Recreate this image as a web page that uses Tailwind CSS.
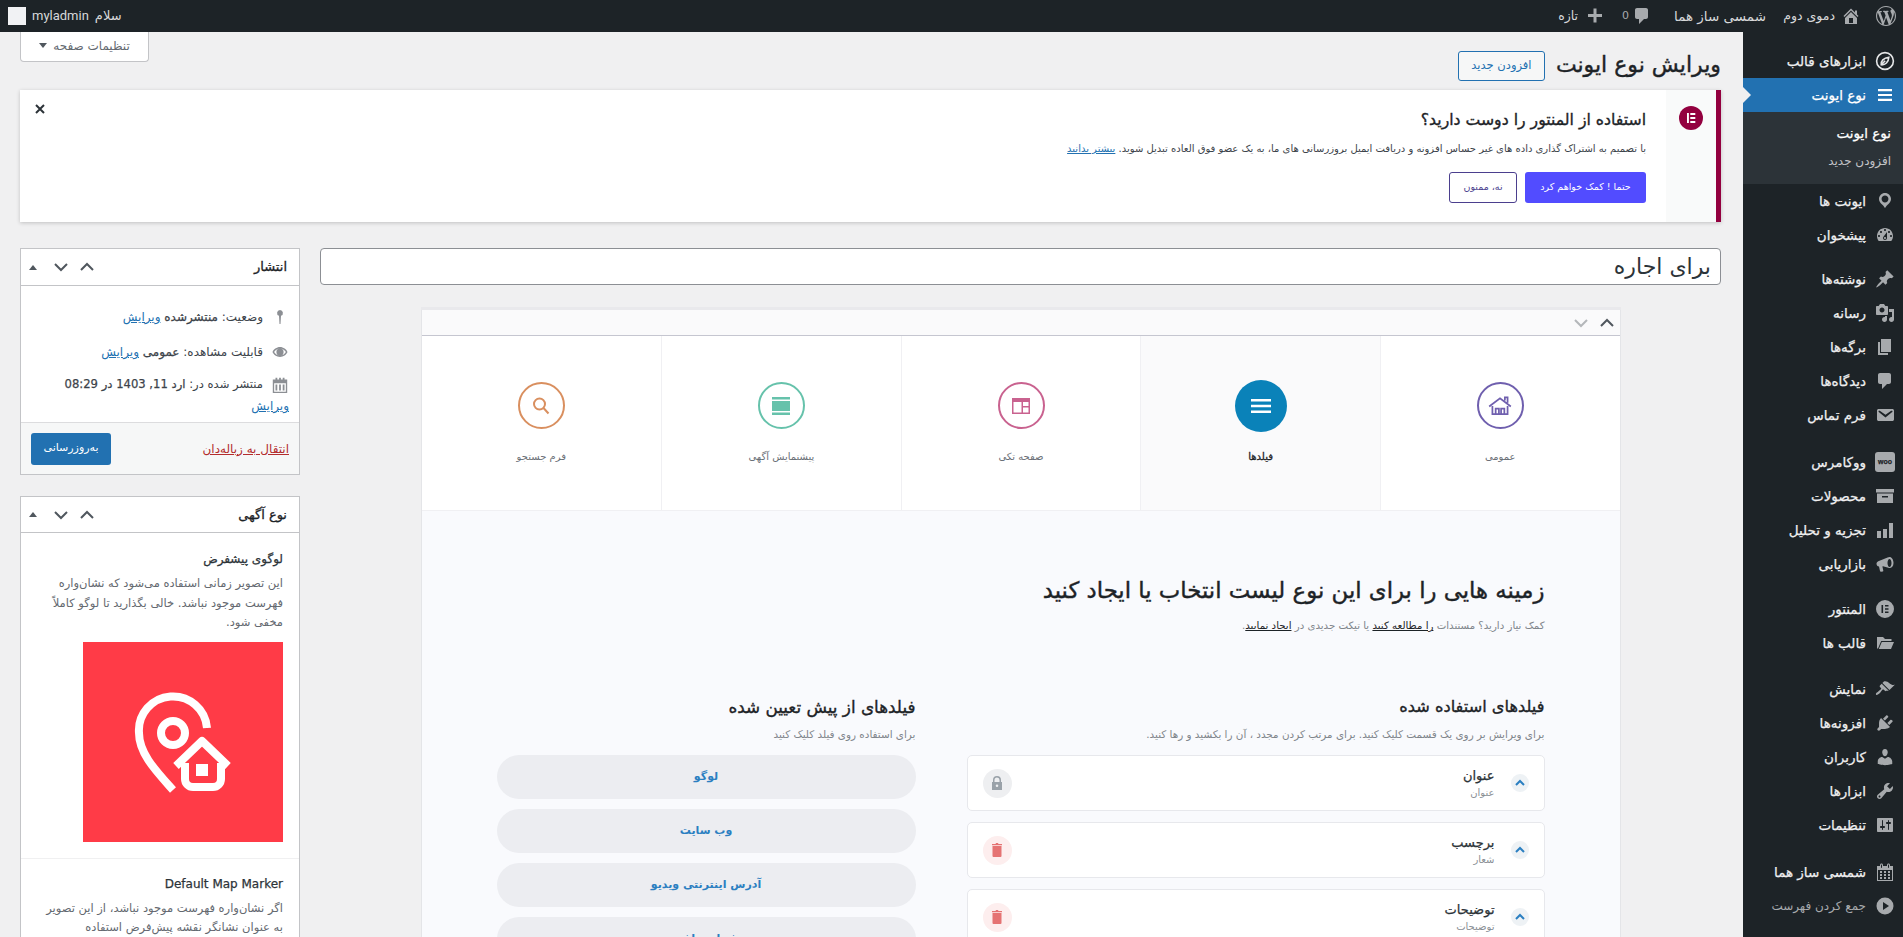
<!DOCTYPE html>
<html lang="fa" dir="rtl">
<head>
    <meta charset="UTF-8">
    <title>ویرایش نوع ایونت</title>
    <script src="https://cdn.jsdelivr.net/npm/@tailwindcss/browser@4"></script>
</head>
<body class="h-screen overflow-hidden bg-[#f0f0f1] text-[#3c434a] text-[12px] font-['DejaVu_Sans',sans-serif]">
    <!-- admin bar -->
    <header class="h-8 bg-[#1d2327] text-[#d7d8da] text-[12.5px] flex items-center justify-between">
        <div class="flex items-center">
            <svg class="w-5 h-5 mr-[7px] fill-[#a7aaad]" viewBox="0 0 20 20"><path fill-rule="evenodd" d="M20 10c0-5.51-4.49-10-10-10C4.48 0 0 4.49 0 10c0 5.52 4.48 10 10 10 5.51 0 10-4.48 10-10zM7.78 15.37L4.37 6.22c.55-.02 1.17-.08 1.17-.08.5-.06.44-1.13-.06-1.11 0 0-1.45.11-2.37.11-.18 0-.37 0-.58-.01C4.12 2.69 6.87 1.11 10 1.11c2.33 0 4.45.87 6.05 2.34-.68-.11-1.65.39-1.65 1.58 0 .74.45 1.36.9 2.1.35.61.55 1.36.55 2.46 0 1.49-1.4 5-1.4 5l-3.03-8.37c.54-.02.82-.17.82-.17.5-.05.44-1.25-.06-1.22 0 0-1.44.12-2.38.12-.87 0-2.33-.12-2.33-.12-.5-.03-.56 1.2-.06 1.22l.92.08 1.26 3.41zM17.41 10c.24-.64.74-1.87.43-4.25.7 1.29 1.05 2.71 1.05 4.25 0 3.29-1.73 6.24-4.4 7.78.97-2.59 1.94-5.2 2.92-7.78zM6.1 18.09C3.12 16.65 1.11 13.53 1.11 10c0-1.3.23-2.48.72-3.59C3.25 10.3 4.67 14.2 6.1 18.09zm4.03-6.63l2.58 6.98c-.86.29-1.76.45-2.71.45-.79 0-1.57-.11-2.29-.33.81-2.38 1.62-4.74 2.42-7.1z"/></svg>
            <svg class="w-5 h-5 mr-[15px] fill-[#a7aaad]" viewBox="0 0 20 20"><path d="M16 8.5l1.53 1.53-1.06 1.06L10 4.62l-6.47 6.47-1.06-1.06L10 2.5l4 4v-2h2v4zm-6-2.46l6 5.99V18H4v-5.97zM12 17v-5H8v5h4z"/></svg>
            <span class="mr-[6px] w-[54px] whitespace-nowrap">دموی دوم</span>
            <span class="mr-[15px] w-[98px] whitespace-nowrap text-[13.5px]">شمسی ساز هما</span>
            <svg class="w-5 h-5 mr-[16px] fill-[#a7aaad]" viewBox="0 0 20 20"><path d="M5 2h9c1.1 0 2 .9 2 2v7c0 1.1-.9 2-2 2h-2l-5 5v-5H5c-1.1 0-2-.9-2-2V4c0-1.1.9-2 2-2z"/></svg>
            <span class="mr-[3px] w-2 text-[#a7aaad] text-[11px]">0</span>
            <svg class="w-5 h-5 mr-[16px] fill-[#a7aaad]" viewBox="0 0 20 20"><path d="M17 8v3h-5.5v5.500h-3V11H3V8h5.500V2.500h3V8H17z"/></svg>
            <span class="mr-[7px]">تازه</span>
        </div>
        <div class="flex items-center ml-2 gap-[6px]">
            <span class="text-[13px]">سلام</span>
            <span class="font-['Roboto',sans-serif] text-[13px]">myladmin</span>
            <span class="w-[18px] h-[18px] bg-[#f1f2f4] block"></span>
        </div>
    </header>

    <div class="flex h-[905px]">
        <!-- admin menu -->
        <aside class="w-40 shrink-0 bg-[#1d2327] pt-3 text-[#f0f0f1] text-[13.5px] [-webkit-text-stroke:0.25px]">
            <a class="flex items-center h-[34px] pr-[8px] gap-[9px]"><svg class="w-5 h-5 fill-none stroke-[#e6e7e8] stroke-[1.6]" viewBox="0 0 20 20"><circle cx="10" cy="10" r="8.4"/><path d="M6.2 13.8c-.5-3.6 2.4-7 7.6-7.6-.2 4.8-3.6 8-7.6 7.6zM6.2 13.8l4-4"/></svg><span>ابزارهای قالب</span></a>
            <a class="relative flex items-center h-[34px] pr-[8px] gap-[9px] bg-[#2271b1] text-white"><svg class="w-5 h-5 fill-white" viewBox="0 0 20 20"><path d="M3 4h14v2.2H3zM3 8.9h14v2.2H3zM3 13.8h14V16H3z"/></svg><span>نوع ایونت</span><i class="absolute left-0 top-[9px] border-y-8 border-y-transparent border-l-8 border-l-[#f0f0f1]"></i></a>
            <div class="bg-[#2c3338] h-[72px] pt-[10px] pr-[12px]">
                <a class="flex items-center h-[22px] text-white">نوع ایونت</a>
                <a class="flex items-center h-[22px] mt-[6px] text-[12px] [-webkit-text-stroke:0] text-[#c3c4c7]">افزودن جدید</a>
            </div>
            <a class="flex items-center h-[34px] pr-[8px] gap-[9px]"><svg class="w-5 h-5 fill-[#a7aaad]" viewBox="0 0 20 20"><path d="M10 2c-3.31 0-6 2.69-6 6 0 2.02 1.17 3.71 2.53 4.89.43.37 1.18.96 1.85 1.83.74.97 1.41 2.01 1.62 2.28.21-.27.88-1.31 1.62-2.28.67-.87 1.42-1.46 1.85-1.83C14.83 11.71 16 10.02 16 8c0-3.31-2.69-6-6-6zm0 2.56c1.9 0 3.44 1.54 3.44 3.44S11.9 11.44 10 11.44 6.56 9.9 6.56 8 8.1 4.56 10 4.56z"/></svg><span>ایونت ها</span></a>
            <a class="flex items-center h-[34px] pr-[8px] gap-[9px]"><svg class="w-5 h-5 fill-[#a7aaad]" viewBox="0 0 20 20"><path fill-rule="evenodd" d="M3.76 16h12.48c1.1-1.37 1.76-3.11 1.76-5 0-4.42-3.58-8-8-8s-8 3.58-8 8c0 1.89.66 3.63 1.76 5zM10 4c.55 0 1 .45 1 1s-.45 1-1 1-1-.45-1-1 .45-1 1-1zM6 6c.55 0 1 .45 1 1s-.45 1-1 1-1-.45-1-1 .45-1 1-1zm8 0c.55 0 1 .45 1 1s-.45 1-1 1-1-.45-1-1 .45-1 1-1zm-5.37 5.55L12 7v6c0 1.1-.9 2-2 2s-2-.9-2-2c0-.57.24-1.08.63-1.45zM4 10c.55 0 1 .45 1 1s-.45 1-1 1-1-.45-1-1 .45-1 1-1zm12 0c.55 0 1 .45 1 1s-.45 1-1 1-1-.45-1-1 .45-1 1-1zm-5 3c0-.55-.45-1-1-1s-1 .45-1 1 .45 1 1 1 1-.45 1-1z"/></svg><span>پیشخوان</span></a>

            <a class="flex items-center h-[34px] mt-[10px] pr-[8px] gap-[9px]"><svg class="w-5 h-5 fill-[#a7aaad]" viewBox="0 0 20 20"><path d="M10.44 3.02l1.82-1.82 6.36 6.35-1.83 1.82c-1.05-.68-2.48-.57-3.41.36l-.75.75c-.92.93-1.04 2.35-.35 3.41l-1.83 1.82-2.41-2.41-2.8 2.79c-.42.42-3.38 2.71-3.8 2.29s1.86-3.39 2.28-3.81l2.79-2.79L4.1 9.36l1.83-1.82c1.05.69 2.48.57 3.4-.36l.75-.75c.93-.92 1.05-2.35.36-3.41z"/></svg><span>نوشته‌ها</span></a>
            <a class="flex items-center h-[34px] pr-[8px] gap-[9px]"><svg class="w-5 h-5 fill-[#a7aaad]" viewBox="0 0 20 20"><path fill-rule="evenodd" d="M13 11V4c0-.55-.45-1-1-1h-1.67L9 1H5L3.67 3H2c-.55 0-1 .45-1 1v7c0 .55.45 1 1 1h10c.55 0 1-.45 1-1zM7 4.5c1.38 0 2.5 1.12 2.5 2.5S8.38 9.5 7 9.5 4.5 8.38 4.5 7 5.62 4.5 7 4.5zM14 6h5v10.5c0 1.38-1.12 2.5-2.5 2.5S14 17.88 14 16.5s1.12-2.5 2.5-2.5c.17 0 .34.02.5.05V9h-3V6zm-4 8.05V13h2v3.5c0 1.38-1.12 2.5-2.5 2.5S7 17.88 7 16.5 8.12 14 9.5 14c.17 0 .34.02.5.05z"/></svg><span>رسانه</span></a>
            <a class="flex items-center h-[34px] pr-[8px] gap-[9px]"><svg class="w-5 h-5 fill-[#a7aaad]" viewBox="0 0 20 20"><path d="M6 15V2h10v13H6zm-1 1h8v2H3V5h2v11z"/></svg><span>برگه‌ها</span></a>
            <a class="flex items-center h-[34px] pr-[8px] gap-[9px]"><svg class="w-5 h-5 fill-[#a7aaad]" viewBox="0 0 20 20"><path d="M5 2h9c1.1 0 2 .9 2 2v7c0 1.1-.9 2-2 2h-2l-5 5v-5H5c-1.1 0-2-.9-2-2V4c0-1.1.9-2 2-2z"/></svg><span>دیدگاه‌ها</span></a>
            <a class="flex items-center h-[34px] pr-[8px] gap-[9px]"><svg class="w-5 h-5 fill-[#a7aaad]" viewBox="0 0 20 20"><path fill-rule="evenodd" d="M3.87 4h13.25C18.37 4 19 4.59 19 5.79v8.42c0 1.19-.63 1.79-1.88 1.79H3.87c-1.25 0-1.88-.6-1.88-1.79V5.79c0-1.2.63-1.79 1.88-1.79zm6.62 8.6l6.74-5.53c.24-.2.43-.66.13-1.07-.29-.41-.82-.42-1.17-.17l-5.7 3.86L4.8 5.83c-.35-.25-.88-.24-1.17.17-.3.41-.11.87.13 1.07z"/></svg><span>فرم تماس</span></a>

            <a class="flex items-center h-[34px] mt-[13px] pr-[8px] gap-[9px]"><span class="w-5 h-5 flex items-center justify-center bg-[#a7aaad] rounded-[3px] text-[#1d2327] text-[7px] font-bold font-['Liberation_Sans',sans-serif]">woo</span><span>ووکامرس</span></a>
            <a class="flex items-center h-[34px] pr-[8px] gap-[9px]"><svg class="w-5 h-5 fill-[#a7aaad]" viewBox="0 0 20 20"><path fill-rule="evenodd" d="M1 3h18v3.5H1zM2 7.5h16V17H2zM7 10v1.5h6V10z"/></svg><span>محصولات</span></a>
            <a class="flex items-center h-[34px] pr-[8px] gap-[9px]"><svg class="w-5 h-5 fill-[#a7aaad]" viewBox="0 0 20 20"><path d="M2 11h4v7H2zM8 9h4v9H8zM14 3h4v15h-4z"/></svg><span>تجزیه و تحلیل</span></a>
            <a class="flex items-center h-[34px] pr-[8px] gap-[9px]"><svg class="w-5 h-5 fill-[#a7aaad]" viewBox="0 0 20 20"><path fill-rule="evenodd" d="M14.5 3C16.6 3 18.5 5.6 18.5 9s-1.9 5-4 5c-.4 0-.8-.1-1.1-.2L8 12.2l-.6.2.9 4c.1.5-.2 1-.7 1.1l-1.5.3c-.5.1-1-.2-1.1-.7L4 12.6c-1.4-.2-2.5-1.3-2.5-2.8 0-1.2.8-2.2 1.8-2.6l9.3-3.6C13.2 3.2 13.8 3 14.5 3zM14.5 5c-1.1 0-2 1.8-2 4s.9 4 2 4 2-1.8 2-4-.9-4-2-4z"/></svg><span>بازاریابی</span></a>

            <a class="flex items-center h-[34px] mt-[11px] pr-[8px] gap-[9px]"><svg class="w-5 h-5 fill-[#a7aaad]" viewBox="0 0 20 20"><path fill-rule="evenodd" d="M10 1a9 9 0 1 0 0 18 9 9 0 0 0 0-18zM6.500 6h1.600v8H6.500zM10 6h3.500v1.600H10zM10 9.200h3.500v1.600H10zM10 12.400h3.500V14H10z"/></svg><span>المنتور</span></a>
            <a class="flex items-center h-[34px] pr-[8px] gap-[9px]"><svg class="w-5 h-5 fill-[#a7aaad]" viewBox="0 0 20 20"><path d="M2 4h6l2 2h6.500v2H6.200L3 15.500H2zM6.800 9H19l-3 7H3.800z"/></svg><span>قالب ها</span></a>

            <a class="flex items-center h-[34px] mt-[12px] pr-[8px] gap-[9px]"><svg class="w-5 h-5 fill-[#a7aaad]" viewBox="0 0 20 20"><path d="M14.48 11.06L7.41 3.99l1.5-1.5c.5-.56 2.3-.47 3.51.32 1.21.8 1.43 1.28 2.91 2.1 1.18.64 2.45 1.26 4.45.85zm-.71.71L6.7 4.7 4.93 6.47c-.39.39-.39 1.02 0 1.41l1.06 1.06c.39.39.39 1.03 0 1.42-.6.6-1.43 1.11-2.21 1.69-.35.26-.7.53-1.01.84C1.43 13.23.4 14.98 1.1 15.68c.7.7 2.45-.33 3.79-1.67.31-.31.58-.66.84-1.01.58-.78 1.09-1.61 1.69-2.21.39-.39 1.03-.39 1.42 0l1.06 1.06c.39.39 1.02.39 1.41 0z"/></svg><span>نمایش</span></a>
            <a class="flex items-center h-[34px] pr-[8px] gap-[9px]"><svg class="w-5 h-5 fill-[#a7aaad]" viewBox="0 0 20 20"><path d="M13.11 4.36L9.87 7.6 8 5.73l3.24-3.24c.35-.34 1.05-.2 1.56.32.52.51.66 1.21.31 1.55zm-8 1.77l.91-1.12 9.01 9.01-1.19.84c-.71.71-2.63 1.16-3.82 1.16H6.14L4.9 17.26c-.59.59-1.54.59-2.12 0-.59-.58-.59-1.53 0-2.12l1.24-1.24v-3.88c0-1.13.4-3.19 1.09-3.89zm7.26 3.97l3.24-3.24c.34-.35 1.04-.21 1.55.31.52.51.66 1.21.31 1.55l-3.24 3.25z"/></svg><span>افزونه‌ها</span></a>
            <a class="flex items-center h-[34px] pr-[8px] gap-[9px]"><svg class="w-5 h-5 fill-[#a7aaad]" viewBox="0 0 20 20"><path d="M10 9.25c-2.27 0-2.73-3.44-2.73-3.44C7 4.02 7.82 2 9.97 2c2.16 0 2.98 2.02 2.71 3.81 0 0-.41 3.44-2.68 3.44zm0 2.57L12.72 10c2.39 0 4.52 2.33 4.52 4.53v2.49s-3.65 1.13-7.24 1.13c-3.65 0-7.24-1.13-7.24-1.13v-2.49c0-2.25 1.94-4.48 4.47-4.48z"/></svg><span>کاربران</span></a>
            <a class="flex items-center h-[34px] pr-[8px] gap-[9px]"><svg class="w-5 h-5 fill-[#a7aaad]" viewBox="0 0 20 20"><path fill-rule="evenodd" d="M16.68 9.77c-1.34 1.34-3.3 1.67-4.95.99l-5.41 6.52c-.99.99-2.59.99-3.58 0s-.99-2.59 0-3.57l6.52-5.42c-.68-1.65-.35-3.61.99-4.95 1.28-1.28 3.12-1.62 4.72-1.06l-2.89 2.89 2.82 2.82 2.86-2.87c.53 1.58.18 3.39-1.08 4.65zM3.81 16.21c.4.39 1.04.39 1.43 0 .4-.4.4-1.04 0-1.43-.39-.4-1.03-.4-1.43 0-.39.39-.39 1.03 0 1.43z"/></svg><span>ابزارها</span></a>
            <a class="flex items-center h-[34px] pr-[8px] gap-[9px]"><svg class="w-5 h-5 fill-[#a7aaad]" viewBox="0 0 20 20"><path fill-rule="evenodd" d="M18 16V4c0-.55-.45-1-1-1H3c-.55 0-1 .45-1 1v12c0 .55.45 1 1 1h14c.55 0 1-.45 1-1zM8 11h1c.55 0 1 .45 1 1s-.45 1-1 1H8v1.5c0 .28-.22.5-.5.5s-.5-.22-.5-.5V13H6c-.55 0-1-.45-1-1s.45-1 1-1h1V5.5c0-.28.22-.5.5-.5s.5.22.5.5V11zm5-2h-1c-.55 0-1-.45-1-1s.45-1 1-1h1V5.5c0-.28.22-.5.5-.5s.5.22.5.5V7h1c.55 0 1 .45 1 1s-.45 1-1 1h-1v5.5c0 .28-.22.5-.5.5s-.5-.22-.5-.5V9z"/></svg><span>تنظیمات</span></a>

            <a class="flex items-center h-[34px] mt-[13px] pr-[8px] gap-[9px]"><svg class="w-5 h-5 fill-[#a7aaad]" viewBox="0 0 20 20"><path fill-rule="evenodd" d="M15 4h3v15H2V4h3V3c0-.41.15-.76.44-1.06.29-.29.65-.44 1.06-.44s.77.15 1.06.44c.29.3.44.65.44 1.06v1h4V3c0-.41.15-.76.44-1.06.29-.29.65-.44 1.06-.44s.77.15 1.06.44c.29.3.44.65.44 1.06v1zM6 3v2.5c0 .14.05.26.15.36.09.09.21.14.35.14s.26-.05.35-.14c.1-.1.15-.22.15-.36V3c0-.14-.05-.26-.15-.35-.09-.1-.21-.15-.35-.15s-.26.05-.35.15c-.1.09-.15.21-.15.35zm7 0v2.5c0 .14.05.26.14.36.1.09.22.14.36.14s.26-.05.36-.14c.09-.1.14-.22.14-.36V3c0-.14-.05-.26-.14-.35-.1-.1-.22-.15-.36-.15s-.26.05-.36.15c-.09.09-.14.21-.14.35zm4 15V8H3v10h14zM7 9v2H5V9h2zm2 0h2v2H9V9zm4 2V9h2v2h-2zm-6 1v2H5v-2h2zm2 0h2v2H9v-2zm4 2v-2h2v2h-2zm-6 1v2H5v-2h2zm4 2H9v-2h2v2zm4 0h-2v-2h2v2z"/></svg><span>شمسی ساز هما</span></a>
            <a class="flex items-center h-[34px] pr-[8px] gap-[9px] text-[12px] [-webkit-text-stroke:0] text-[#a7aaad]"><svg class="w-5 h-5 fill-[#a7aaad]" viewBox="0 0 20 20"><path fill-rule="evenodd" d="M10 1.500a8.500 8.500 0 1 0 0 17 8.500 8.500 0 0 0 0-17zM8 6l6 4-6 4z"/></svg><span>جمع کردن فهرست</span></a>
        </aside>

        <!-- content -->
        <main class="flex-1 min-w-0 pr-[22px] pl-5">
            <div class="flex justify-between h-[58px]">
                <div class="flex items-center h-[30px] mt-[19px] gap-[11px]">
                    <h1 class="text-[22px] leading-[28px] -mt-[2px] [-webkit-text-stroke:0.4px] text-[#1d2327]">ویرایش نوع ایونت</h1>
                    <a class="h-[30px] w-[87px] flex items-center justify-center border border-[#2271b1] rounded-[3px] text-[#2271b1] bg-[#f6f7f7] text-[11.5px]">افزودن جدید</a>
                </div>
                <button class="h-[30px] w-[129px] bg-white border border-t-0 border-[#c3c4c7] rounded-b-[4px] flex items-center justify-center gap-[6px] pb-[2px] text-[#646970] text-[12px]">تنظیمات صفحه <i class="border-x-[4px] border-x-transparent border-t-[5px] border-t-[#50575e]"></i></button>
            </div>

            <!-- elementor notice -->
            <section class="h-[132px] bg-white border-r-[5px] border-[#93003f] shadow-[0_1px_4px_rgba(0,0,0,0.2)] flex">
                <div class="w-[50px] shrink-0 bg-[#f9fafa] pt-[16px] flex justify-center">
                    <svg class="w-6 h-6" viewBox="0 0 24 24"><circle cx="12" cy="12" r="12" fill="#93003f"/><path fill="#fff" d="M8 7h1.900v10H8zM11.300 7h5v1.900h-5zM11.300 11.050h5v1.900h-5zM11.300 15.100h5V17h-5z"/></svg>
                </div>
                <div class="flex-1 pr-[20px] relative">
                    <h3 class="text-[15.7px] [-webkit-text-stroke:0.35px] text-[#1d2327] mt-[18px] leading-[24px]">استفاده از المنتور را دوست دارید؟</h3>
                    <p class="text-[10px] text-[#3c434a] mt-[8px] leading-[18px]">با تصمیم به اشتراک گذاری داده های غیر حساس افزونه و دریافت ایمیل بروزرسانی های ما، به یک عضو فوق العاده تبدیل شوید. <a class="text-[#2271b1] underline">بیشتر بدانید</a></p>
                    <div class="flex gap-2 mt-[14px]">
                        <a class="w-[121px] h-[31px] bg-[#524cff] text-white rounded-[3px] flex items-center justify-center text-[9.5px]">حتما ! کمک خواهم کرد</a>
                        <a class="w-[68px] h-[31px] border border-[#4b3f8e] text-[#4b3f8e] rounded-[3px] flex items-center justify-center text-[9.5px]">نه، ممنون</a>
                    </div>
                    <svg class="absolute left-[14px] top-[13px] w-3 h-3 stroke-[#2c3338] stroke-[2]" viewBox="0 0 12 12"><path d="M2 2l8 8M10 2l-8 8"/></svg>
                </div>
            </section>

            <div class="flex gap-5 mt-[26px]">
                <!-- main column -->
                <div class="flex-1 min-w-0">
                    <div class="h-[37px] bg-white border border-[#8c8f94] rounded-[4px] flex items-center pr-[9px] text-[22px] text-[#2c3338]">برای اجاره</div>

                    <div class="w-[1200px] mx-auto mt-[25px] bg-white border-x border-[#e4e5e8] shadow-[0_-3px_0_#e9e9ec]">
                        <div class="h-[26px] bg-[#fafafb] border-b border-[#c5c6d0] flex items-center gap-[8px] pr-[4px]">
                            <svg class="w-[18px] h-[18px] fill-none stroke-[#50575e] stroke-2" viewBox="0 0 18 18"><path d="M3 12l6-6 6 6"/></svg>
                            <svg class="w-[18px] h-[18px] fill-none stroke-[#b4b7ba] stroke-2" viewBox="0 0 18 18"><path d="M3 6l6 6 6-6"/></svg>
                        </div>

                        <!-- tabs -->
                        <div class="grid grid-cols-5 h-[175px] border-b border-[#f0f0f3]">
                            <div class="border-l border-[#f0f0f3] flex flex-col items-center pt-[46px]">
                                <div class="w-[47px] h-[47px] rounded-full border-2 border-[#6f5fae] flex items-center justify-center">
                                    <svg class="w-[26px] h-[26px] fill-none stroke-[#6f5fae] stroke-[1.6]" viewBox="0 0 24 24"><path d="M2 12.500L12 5l10 7.500M5 12v7.500h14V12M8 14.500h3v5H8zM13 14.500h3v5h-3zM16.500 7V4H19v5"/></svg>
                                </div>
                                <span class="mt-[19px] leading-[18px] text-[10px] text-[#6b7077]">عمومی</span>
                            </div>
                            <div class="border-l border-[#f0f0f3] bg-[#fafafb] flex flex-col items-center pt-[46px]">
                                <div class="h-[47px] flex items-center">
                                    <div class="w-[52px] h-[52px] rounded-full bg-[#0a82b9] flex items-center justify-center">
                                        <svg class="w-6 h-6 fill-white" viewBox="0 0 24 24"><path d="M2 5h20v2.500H2zM2 10.800h20v2.500H2zM2 16.500h20V19H2z"/></svg>
                                    </div>
                                </div>
                                <span class="mt-[19px] leading-[18px] text-[10px] [-webkit-text-stroke:0.3px] text-[#1d2327]">فیلدها</span>
                            </div>
                            <div class="border-l border-[#f0f0f3] flex flex-col items-center pt-[46px]">
                                <div class="w-[47px] h-[47px] rounded-full border-2 border-[#c9628f] flex items-center justify-center">
                                    <svg class="w-5 h-5 fill-[#c9628f]" viewBox="0 0 20 20"><path fill-rule="evenodd" d="M1 2h18v16H1zM2.500 6v10.500h8V6zM12 6v4h5.500V6zM12 11.500v5h5.500v-5z"/></svg>
                                </div>
                                <span class="mt-[19px] leading-[18px] text-[10px] text-[#6b7077]">صفحه تکی</span>
                            </div>
                            <div class="border-l border-[#f0f0f3] flex flex-col items-center pt-[46px]">
                                <div class="w-[47px] h-[47px] rounded-full border-2 border-[#66c2ab] flex items-center justify-center">
                                    <svg class="w-5 h-5 fill-[#66c2ab]" viewBox="0 0 20 20"><path d="M1 1h18v2.500H1zM1 5h18v10H1zM1 16.500h18V19H1z"/></svg>
                                </div>
                                <span class="mt-[19px] leading-[18px] text-[10px] text-[#6b7077]">پیشنمایش آگهی</span>
                            </div>
                            <div class="flex flex-col items-center pt-[46px]">
                                <div class="w-[47px] h-[47px] rounded-full border-2 border-[#d98f5f] flex items-center justify-center">
                                    <svg class="w-5 h-5 fill-none stroke-[#d98f5f] stroke-2" viewBox="0 0 20 20"><circle cx="8.500" cy="8" r="5.500"/><path d="M12.500 12l5 5.500"/></svg>
                                </div>
                                <span class="mt-[19px] leading-[18px] text-[10px] text-[#6b7077]">فرم جستجو</span>
                            </div>
                        </div>

                        <!-- fields -->
                        <div class="bg-[#f9fafd] pr-[75px] pl-[75px] pt-[63px] pb-10">
                            <h2 class="text-[22.8px] [-webkit-text-stroke:0.4px] leading-[32px] text-[#1d2327]">زمینه هایی را برای این نوع لیست انتخاب یا ایجاد کنید</h2>
                            <p class="mt-[10px] leading-5 text-[10.2px] text-[#80858b]">کمک نیاز دارید؟ مستندات <a class="text-[#1d2327] underline">را مطالعه کنید</a> یا تیکت جدیدی در <a class="text-[#1d2327] underline">ایجاد نمایید</a>.</p>

                            <div class="flex justify-between mt-[59px]">
                                <div class="w-[578px]">
                                    <h3 class="text-[16.2px] [-webkit-text-stroke:0.35px] leading-6 text-[#1d2327]">فیلدهای استفاده شده</h3>
                                    <p class="mt-[5px] leading-5 text-[10.4px] text-[#80858b]">برای ویرایش بر روی یک قسمت کلیک کنید. برای مرتب کردن مجدد ، آن را بکشید و رها کنید.</p>
                                    <div class="mt-[11px] flex flex-col gap-[11px]">
                                        <div class="h-[56px] bg-white border border-[#e7e8ec] rounded-[5px] flex items-center pr-[15px] pl-[15px]">
                                            <span class="w-[18px] h-[18px] rounded-full bg-[#eef2f5] flex items-center justify-center"><svg class="w-3 h-3 fill-none stroke-[#2b7fc1] stroke-2" viewBox="0 0 12 12"><path d="M2 8l4-4 4 4"/></svg></span>
                                            <div class="mr-[16px]">
                                                <div class="leading-[20px] [-webkit-text-stroke:0.25px] text-[13px] text-[#2c3338]">عنوان</div>
                                                <div class="leading-[14px] text-[10px] text-[#8a8f95]">عنوان</div>
                                            </div>
                                            <span class="mr-auto w-[29px] h-[29px] rounded-full bg-[#eeeff1] flex items-center justify-center"><svg class="w-[14px] h-[14px] fill-[#9aa2a9]" viewBox="0 0 14 14"><path fill-rule="evenodd" d="M2 6h1V4a4 4 0 0 1 8 0v2h1v8H2zM4.500 6h5V4a2.500 2.500 0 0 0-5 0zM7 8.500a1.300 1.300 0 1 0 0 2.600 1.300 1.300 0 0 0 0-2.600z"/></svg></span>
                                        </div>
                                        <div class="h-[56px] bg-white border border-[#e7e8ec] rounded-[5px] flex items-center pr-[15px] pl-[15px]">
                                            <span class="w-[18px] h-[18px] rounded-full bg-[#eef2f5] flex items-center justify-center"><svg class="w-3 h-3 fill-none stroke-[#2b7fc1] stroke-2" viewBox="0 0 12 12"><path d="M2 8l4-4 4 4"/></svg></span>
                                            <div class="mr-[16px]">
                                                <div class="leading-[20px] [-webkit-text-stroke:0.25px] text-[13px] text-[#2c3338]">برچسب</div>
                                                <div class="leading-[14px] text-[10px] text-[#8a8f95]">شعار</div>
                                            </div>
                                            <span class="mr-auto w-[29px] h-[29px] rounded-full bg-[#fdeeee] flex items-center justify-center"><svg class="w-[14px] h-[14px] fill-[#e57373]" viewBox="0 0 14 14"><path d="M2.500 3h9v10a1 1 0 0 1-1 1h-7a1 1 0 0 1-1-1zM2 1h3.500l.5-1h2l.5 1H12v1.300H2z"/></svg></span>
                                        </div>
                                        <div class="h-[56px] bg-white border border-[#e7e8ec] rounded-[5px] flex items-center pr-[15px] pl-[15px]">
                                            <span class="w-[18px] h-[18px] rounded-full bg-[#eef2f5] flex items-center justify-center"><svg class="w-3 h-3 fill-none stroke-[#2b7fc1] stroke-2" viewBox="0 0 12 12"><path d="M2 8l4-4 4 4"/></svg></span>
                                            <div class="mr-[16px]">
                                                <div class="leading-[20px] [-webkit-text-stroke:0.25px] text-[13px] text-[#2c3338]">توضیحات</div>
                                                <div class="leading-[14px] text-[10px] text-[#8a8f95]">توضیحات</div>
                                            </div>
                                            <span class="mr-auto w-[29px] h-[29px] rounded-full bg-[#fdeeee] flex items-center justify-center"><svg class="w-[14px] h-[14px] fill-[#e57373]" viewBox="0 0 14 14"><path d="M2.500 3h9v10a1 1 0 0 1-1 1h-7a1 1 0 0 1-1-1zM2 1h3.500l.5-1h2l.5 1H12v1.300H2z"/></svg></span>
                                        </div>
                                    </div>
                                </div>
                                <div class="w-[419px]">
                                    <h3 class="text-[16.8px] [-webkit-text-stroke:0.35px] leading-6 text-[#1d2327]">فیلدهای از پیش تعیین شده</h3>
                                    <p class="mt-[5px] leading-5 text-[10.4px] text-[#80858b]">برای استفاده روی فیلد کلیک کنید</p>
                                    <div class="mt-[11px] flex flex-col gap-[10px] text-[11px] font-semibold text-[#2b7fc1]">
                                        <a class="h-[44px] rounded-full bg-[#ecedf1] flex items-center justify-center">لوگو</a>
                                        <a class="h-[44px] rounded-full bg-[#ecedf1] flex items-center justify-center">وب سایت</a>
                                        <a class="h-[44px] rounded-full bg-[#ecedf1] flex items-center justify-center">آدرس اینترنتی ویدیو</a>
                                        <a class="h-[44px] rounded-full bg-[#ecedf1] flex items-center justify-center">شماره تلفن</a>
                                    </div>
                                </div>
                            </div>
                        </div>
                    </div>
                </div>

                <!-- side column -->
                <div class="w-[280px] shrink-0">
                    <div class="h-[227px] bg-white border border-[#c3c4c7] flex flex-col">
                        <div class="h-[37px] shrink-0 border-b border-[#c3c4c7] flex items-center justify-between pr-[12px] pl-[8px]">
                            <h2 class="text-[13px] [-webkit-text-stroke:0.3px] text-[#1d2327]">انتشار</h2>
                            <div class="flex items-center gap-[8px]">
                                <svg class="w-[18px] h-[18px] fill-none stroke-[#50575e] stroke-2" viewBox="0 0 18 18"><path d="M3 12l6-6 6 6"/></svg>
                                <svg class="w-[18px] h-[18px] fill-none stroke-[#50575e] stroke-2" viewBox="0 0 18 18"><path d="M3 6l6 6 6-6"/></svg>
                                <i class="mr-[7px] border-x-[4px] border-x-transparent border-b-[5px] border-b-[#50575e]"></i>
                            </div>
                        </div>
                        <div class="flex-1 pt-[21px] pr-[10px] text-[12px]">
                            <div class="flex items-center h-5 gap-[8px]">
                                <svg class="w-[18px] h-[18px] fill-[#8c8f94]" viewBox="0 0 18 18"><path d="M9 2a3 3 0 0 1 1 5.800L9.500 16h-1L8 7.800A3 3 0 0 1 9 2z"/></svg>
                                <span>وضعیت: <b class="font-normal [-webkit-text-stroke:0.25px]">منتشرشده</b> <a class="text-[#2271b1] underline">ویرایش</a></span>
                            </div>
                            <div class="flex items-center h-5 mt-[15px] gap-[8px]">
                                <svg class="w-[18px] h-[18px] fill-[#8c8f94]" viewBox="0 0 20 20"><path fill-rule="evenodd" d="M18.300 10c-1 2.800-4.500 5.500-8.300 5.500S2.700 12.800 1.700 10c1-2.800 4.500-5.500 8.300-5.500s7.300 2.700 8.300 5.500zM10 6a4 4 0 1 0 0 8 4 4 0 0 0 0-8zM3.500 10c1 1.800 3.500 4 6.500 4s5.500-2.200 6.500-4c-1-1.800-3.500-4-6.500-4S4.500 8.200 3.500 10z"/></svg>
                                <span>قابلیت مشاهده: <b class="font-normal [-webkit-text-stroke:0.25px]">عمومی</b> <a class="text-[#2271b1] underline">ویرایش</a></span>
                            </div>
                            <div class="flex items-center h-5 mt-[13px] gap-[8px] text-[11.6px]">
                                <svg class="w-[18px] h-[18px] fill-[#8c8f94]" viewBox="0 0 20 20"><path fill-rule="evenodd" d="M15 4h3v15H2V4h3V2h2v2h2V2h2v2h2V2h2zM3.500 8v9.500h13V8zM5 9.500h2V16H5zM9 9.500h2V16H9zM13 9.500h2V16h-2z"/></svg>
                                <span>منتشر شده در: <b class="font-normal [-webkit-text-stroke:0.25px]">ارد 11, 1403 در 08:29</b></span>
                            </div>
                            <a class="block mt-[1px] text-[#2271b1] underline leading-[20px]">ویرایش</a>
                        </div>
                        <div class="h-[52px] shrink-0 bg-[#f6f7f7] border-t border-[#dcdcde] flex items-center justify-between pr-[10px] pl-[10px]">
                            <a class="text-[#b32d2e] underline text-[12px]">انتقال به زباله‌دان</a>
                            <a class="w-[80px] h-[32px] bg-[#2271b1] text-white rounded-[3px] flex items-center justify-center text-[11px]">به‌روزرسانی</a>
                        </div>
                    </div>

                    <div class="mt-[21px] bg-white border border-[#c3c4c7]">
                        <div class="h-[36px] border-b border-[#c3c4c7] flex items-center justify-between pr-[12px] pl-[8px]">
                            <h2 class="text-[13px] [-webkit-text-stroke:0.3px] text-[#1d2327]">نوع آگهی</h2>
                            <div class="flex items-center gap-[8px]">
                                <svg class="w-[18px] h-[18px] fill-none stroke-[#50575e] stroke-2" viewBox="0 0 18 18"><path d="M3 12l6-6 6 6"/></svg>
                                <svg class="w-[18px] h-[18px] fill-none stroke-[#50575e] stroke-2" viewBox="0 0 18 18"><path d="M3 6l6 6 6-6"/></svg>
                                <i class="mr-[7px] border-x-[4px] border-x-transparent border-b-[5px] border-b-[#50575e]"></i>
                            </div>
                        </div>
                        <div class="px-4 pt-4 pb-4 border-b border-[#f0f0f1]">
                            <h4 class="[-webkit-text-stroke:0.25px] leading-5 text-[12px] text-[#2c3338]">لوگوی پیشفرض</h4>
                            <p class="mt-[5px] leading-[19.5px] text-[11.5px] text-[#646970]">این تصویر زمانی استفاده می‌شود که نشان‌واره فهرست موجود نباشد. خالی بگذارید تا لوگو کاملاً مخفی شود.</p>
                            <svg class="block w-[200px] h-[200px] mt-[9px]" viewBox="0 0 200 200">
                                <rect width="200" height="200" fill="#ff3b47"/>
                                <g fill="none" stroke="#fff" stroke-width="8">
                                    <path d="M90 148C74 130 56 112 56 91A34 34 0 0 1 124 86"/>
                                    <circle cx="90" cy="91" r="12"/>
                                    <path d="M93 124l26-25 26 25" stroke-linejoin="round"/>
                                    <path d="M102 121v16a8 8 0 0 0 8 8h20a8 8 0 0 0 8-8v-16"/>
                                </g>
                                <rect x="113" y="122" width="12" height="12" fill="#fff"/>
                            </svg>
                        </div>
                        <div class="px-4 pt-[15px]">
                            <h4 class="[-webkit-text-stroke:0.25px] leading-5 text-[12px] text-[#2c3338]">Default Map Marker</h4>
                            <p class="mt-[5px] leading-[19.5px] text-[11.5px] text-[#646970]">اگر نشان‌واره فهرست موجود نباشد، از این تصویر به عنوان نشانگر نقشه پیش‌فرض استفاده<br>خواهد شد.</p>
                        </div>
                    </div>
                </div>
            </div>
        </main>
    </div>
</body>
</html>
